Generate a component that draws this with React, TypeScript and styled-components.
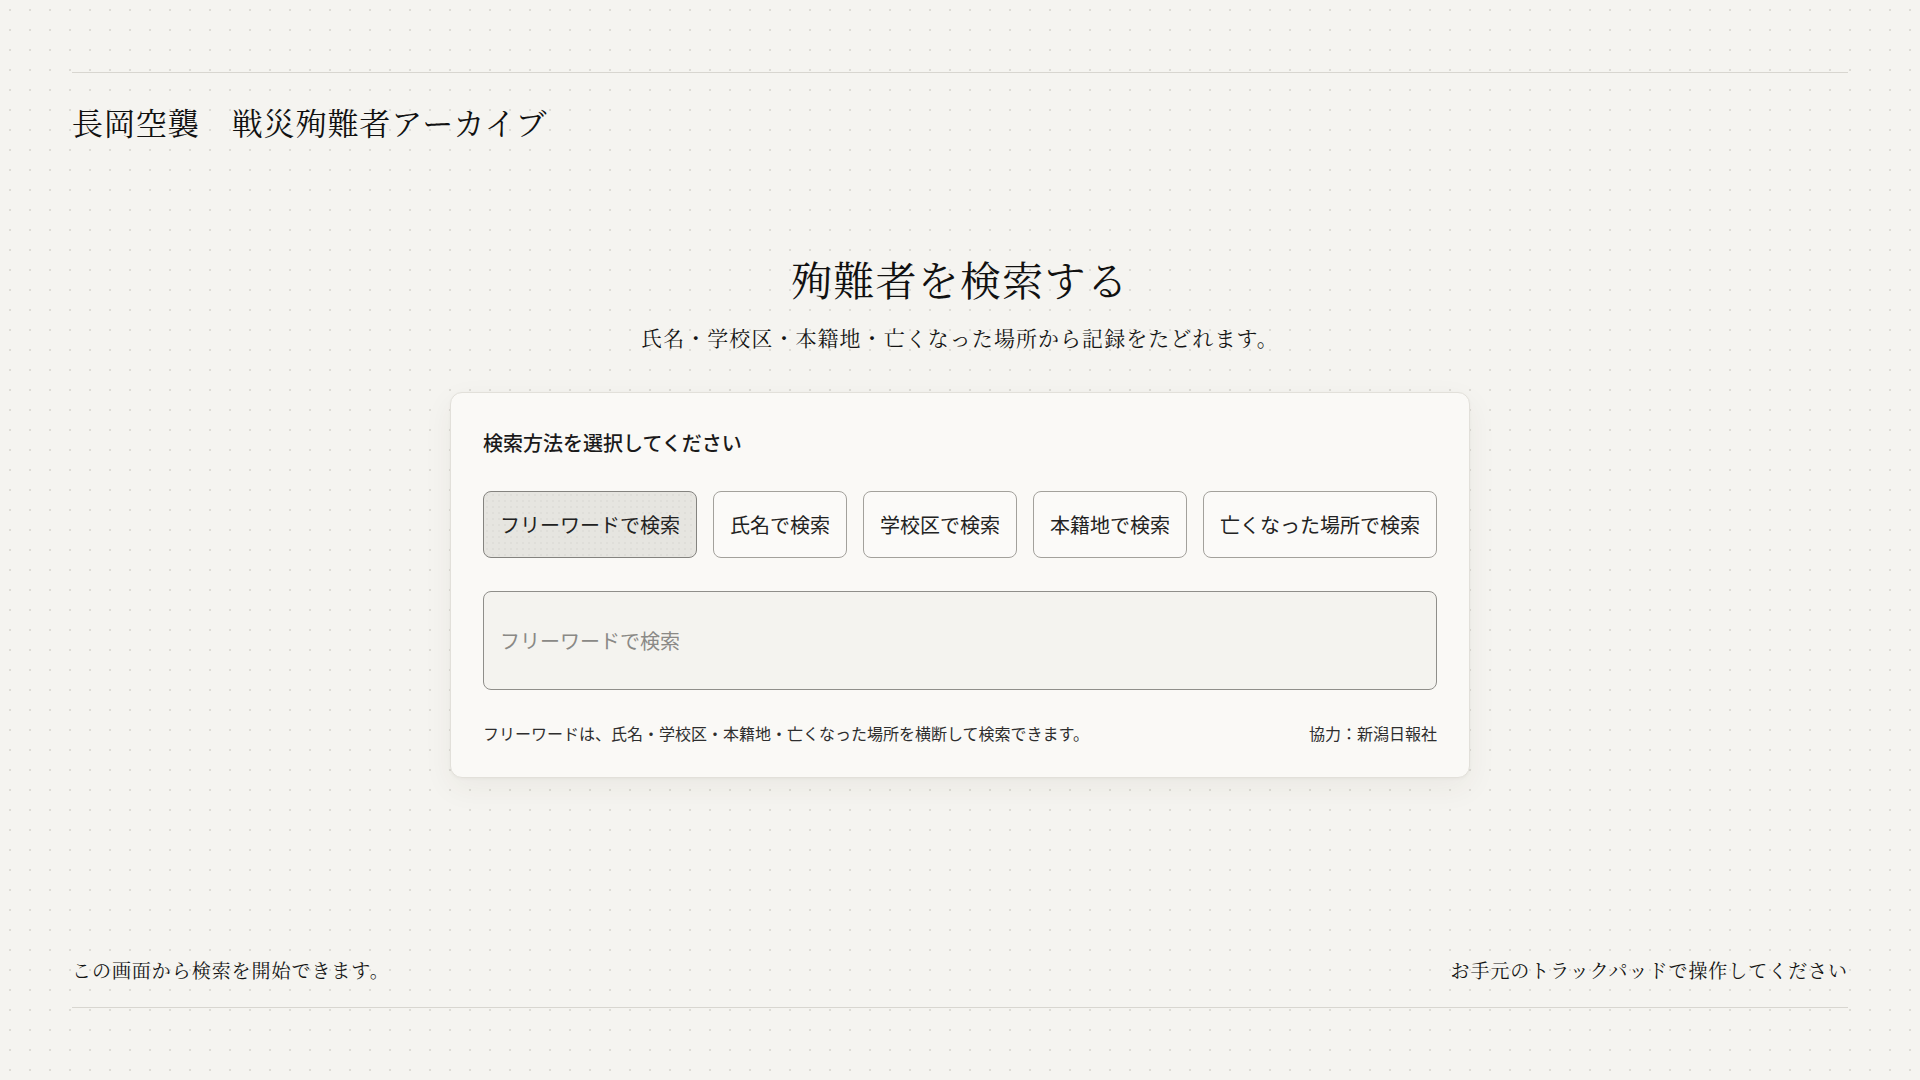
import React, { Component } from 'react'
import styled, { createGlobalStyle } from 'styled-components'

const SERIF = `"Noto Serif CJK JP", "IPAexMincho", "IPAMincho", "Liberation Serif", serif`
const SANS = `"Noto Sans CJK JP", "Noto Sans", sans-serif`

const GlobalStyle = createGlobalStyle`
  html, body {
    margin: 0;
    padding: 0;
  }

  body {
    background-color: #f5f4f0;
    background-image: radial-gradient(circle at center, #dedcd6 1px, transparent 1.4px);
    background-size: 20px 20px;
    color: #141414;
    font-family: ${SERIF};
  }

  * {
    box-sizing: border-box;
  }
`

const PageStyled = styled.div`
  min-height: 100vh;
  padding: 72px;
  display: flex;
  flex-direction: column;
`

const HeaderStyled = styled.header`
  border-top: 1px solid #d8d6d0;
  padding-top: 28px;
`

const SiteTitleStyled = styled.h1`
  margin: 0;
  font-family: ${SERIF};
  font-weight: 400;
  font-size: 31px;
  line-height: 42px;
  letter-spacing: 0.03em;
  color: #111111;
`

const MainStyled = styled.main`
  flex: 1;
  display: flex;
  flex-direction: column;
  align-items: center;
  padding-top: 107px;
`

const HeadingStyled = styled.h2`
  margin: 0;
  font-family: ${SERIF};
  font-weight: 400;
  font-size: 41px;
  line-height: 58px;
  letter-spacing: 0.03em;
  color: #111111;
`

const LeadStyled = styled.p`
  margin: 13px 0 0;
  font-size: 21px;
  line-height: 32px;
  letter-spacing: 0.05em;
`

const CardStyled = styled.section`
  margin-top: 39px;
  width: 1020px;
  padding: 36px 32px 32px;
  background-color: #faf9f6;
  border: 1px solid #e2e0da;
  border-radius: 12px;
  box-shadow: 0 10px 30px rgba(60, 50, 30, 0.06), 0 1px 3px rgba(60, 50, 30, 0.04);
  font-family: ${SANS};
`

const CardLabelStyled = styled.div`
  font-size: 20px;
  line-height: 27px;
  font-weight: 500;
  color: #1a1a1a;
`

const ModeRowStyled = styled.div`
  margin-top: 35px;
  display: flex;
  gap: 16px;
`

const ModeButtonStyled = styled.button<{ active: boolean }>`
  height: 67px;
  padding: 0 16px;
  border-radius: 8px;
  border: 1px solid ${props => props.active ? '#84837f' : '#a3a19c'};
  background-color: ${props => props.active ? '#e6e5e0' : '#fbfaf8'};
  background-image: ${props => props.active ? 'radial-gradient(circle at center, rgba(0,0,0,0.03) 0.8px, transparent 1.2px)' : 'none'};
  background-size: 6px 6px;
  font-family: ${SANS};
  font-size: 20px;
  font-weight: 400;
  color: #222222;
  cursor: pointer;
  white-space: nowrap;
`

const SearchInputStyled = styled.input`
  display: block;
  width: 100%;
  margin-top: 33px;
  height: 99px;
  padding: 0 16px;
  border: 1px solid #8f8e8a;
  border-radius: 8px;
  background-color: #f4f3ef;
  font-family: ${SANS};
  font-size: 20px;
  color: #222222;
  outline: none;

  &::placeholder {
    color: #8a8986;
  }
`

const NoteRowStyled = styled.div`
  margin-top: 31px;
  display: flex;
  justify-content: space-between;
  font-size: 16px;
  line-height: 24px;
  color: #2e2e2e;
`

const FooterStyled = styled.footer`
  display: flex;
  justify-content: space-between;
  align-items: center;
  border-bottom: 1px solid #d8d6d0;
  padding-bottom: 23px;
  font-size: 19px;
  line-height: 29px;
  letter-spacing: 0.05em;
`

type Mode = {
  id: string,
  label: string
}

const MODES: Array<Mode> = [
  { id: 'free', label: 'フリーワードで検索' },
  { id: 'name', label: '氏名で検索' },
  { id: 'school', label: '学校区で検索' },
  { id: 'domicile', label: '本籍地で検索' },
  { id: 'place', label: '亡くなった場所で検索' }
]

type AppState = {
  selectedMode: string,
  query: string
}

class App extends Component<{}, AppState> {
  state: AppState = {
    selectedMode: 'free',
    query: ''
  }

  selectMode = (id: string) => {
    this.setState({ selectedMode: id })
  }

  renderMode = (mode: Mode) => {
    return <ModeButtonStyled key={mode.id} active={mode.id === this.state.selectedMode} onClick={() => this.selectMode(mode.id)}>
      {mode.label}
    </ModeButtonStyled>
  }

  render() {
    const { selectedMode, query } = this.state
    const current = MODES.find(mode => mode.id === selectedMode) || MODES[0]
    return <>
      <GlobalStyle />
      <PageStyled>
        <HeaderStyled>
          <SiteTitleStyled>長岡空襲　戦災殉難者アーカイブ</SiteTitleStyled>
        </HeaderStyled>
        <MainStyled>
          <HeadingStyled>殉難者を検索する</HeadingStyled>
          <LeadStyled>氏名・学校区・本籍地・亡くなった場所から記録をたどれます。</LeadStyled>
          <CardStyled>
            <CardLabelStyled>検索方法を選択してください</CardLabelStyled>
            <ModeRowStyled>{MODES.map(this.renderMode)}</ModeRowStyled>
            <SearchInputStyled
              value={query}
              placeholder={current.label}
              onChange={e => this.setState({ query: e.target.value })}
            />
            <NoteRowStyled>
              <span>フリーワードは、氏名・学校区・本籍地・亡くなった場所を横断して検索できます。</span>
              <span>協力：新潟日報社</span>
            </NoteRowStyled>
          </CardStyled>
        </MainStyled>
        <FooterStyled>
          <span>この画面から検索を開始できます。</span>
          <span>お手元のトラックパッドで操作してください</span>
        </FooterStyled>
      </PageStyled>
    </>
  }
}

export default App
